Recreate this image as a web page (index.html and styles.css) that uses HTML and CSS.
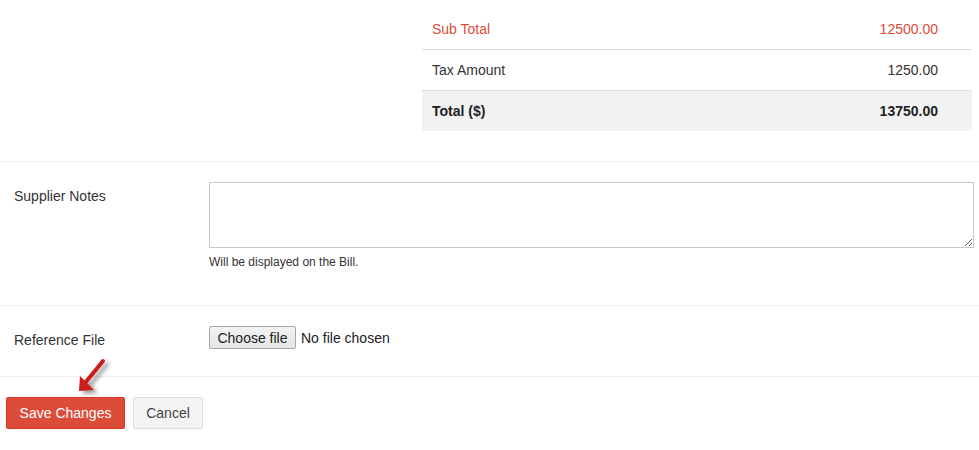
FILE: index.html
```html
<!DOCTYPE html>
<html>
<head>
<meta charset="utf-8">
<link rel="stylesheet" href="styles.css">
</head>
<body>
<div class="page">
  <div class="totals-wrap">
    <div class="totals">
      <div class="trow sub"><span>Sub Total</span><span>12500.00</span></div>
      <div class="trow"><span>Tax Amount</span><span>1250.00</span></div>
      <div class="trow total"><span>Total ($)</span><span>13750.00</span></div>
    </div>
  </div>
  <div class="group notes">
    <label class="label">Supplier Notes</label>
    <div class="field">
      <textarea class="textarea"></textarea>
      <div class="help">Will be displayed on the Bill.</div>
    </div>
  </div>
  <div class="group file">
    <label class="label">Reference File</label>
    <div class="field filefield">
      <button type="button" class="choose">Choose file</button>
      <span class="nofile">No file chosen</span>
    </div>
  </div>
  <div class="actions">
    <button class="btn btn-save">Save Changes</button>
    <button class="btn btn-cancel">Cancel</button>
    <svg class="arrow" width="60" height="55" viewBox="0 0 60 55">
      <defs>
        <filter id="sh" x="-50%" y="-50%" width="200%" height="200%">
          <feGaussianBlur in="SourceAlpha" stdDeviation="2"/>
          <feOffset dx="4" dy="3" result="b"/>
          <feComponentTransfer><feFuncA type="linear" slope="0.4"/></feComponentTransfer>
          <feMerge><feMergeNode/><feMergeNode in="SourceGraphic"/></feMerge>
        </filter>
      </defs>
      <g filter="url(#sh)">
        <line x1="33" y1="6" x2="15" y2="28" stroke="#cc1a1f" stroke-width="4" stroke-linecap="round"/>
        <polygon points="9,36 10,21 24,35" fill="#cc1a1f"/>
      </g>
    </svg>
  </div>
</div>
</body>
</html>
```
FILE: styles.css
```css
* { box-sizing: border-box; }
html, body { margin: 0; padding: 0; background: #fff; }
body {
  font-family: "Liberation Sans", Arial, sans-serif;
  font-size: 14px;
  color: #333;
}
.page { width: 979px; }
.totals-wrap {
  padding: 9px 7px 30px 422px;
  border-bottom: 1px solid #eeeeee;
}
.totals { width: 550px; }
.trow {
  display: flex;
  justify-content: space-between;
  align-items: center;
  height: 41px;
  padding: 0 34px 0 10px;
  border-top: 1px solid #dddddd;
}
.trow:first-child { border-top: none; height: 40px; }
.trow.sub { color: #dd4b39; }
.trow.total { background: #f2f2f2; font-weight: bold; color: #222; }
.group {
  display: flex;
  padding: 20px 5px 0 14px;
  border-bottom: 1px solid #eeeeee;
}
.notes { height: 144px; }
.file { height: 71px; }
.label { width: 195px; flex: none; padding-top: 6px; }
.field { flex: 1; }
.textarea {
  display: block;
  width: 765px;
  height: 66px;
  border: 1px solid #c8c8c8;
  resize: vertical;
  margin: 0;
  font-family: inherit;
}
.help { font-size: 12px; color: #333; margin-top: 7px; }
.filefield {
  display: flex;
  align-items: center;
  height: 23px;
}
.choose {
  font-family: "Liberation Sans", Arial, sans-serif;
  font-size: 14px;
  color: #222;
  height: 23px;
  width: 87px;
  padding: 0;
  margin: 0 5px 0 0;
  background: linear-gradient(#f2f2f2, #e6e6e6);
  border: 1px solid #a6a6a6;
  border-radius: 2px;
}
.nofile { color: #222; }
.actions {
  position: relative;
  display: flex;
  gap: 8px;
  padding: 20px 6px 0;
}
.btn {
  height: 32px;
  font-family: "Liberation Sans", Arial, sans-serif;
  font-size: 14px;
  padding: 0 12px;
  border-radius: 2px;
  margin: 0;
}
.btn-save {
  background: #dd4b39;
  border: 1px solid #d73925;
  color: #fff;
  width: 119px;
}
.btn-cancel {
  background: #f4f4f4;
  border: 1px solid #dddddd;
  color: #444;
  width: 70px;
}
.arrow {
  position: absolute;
  left: 70px;
  top: -22px;
}
```
